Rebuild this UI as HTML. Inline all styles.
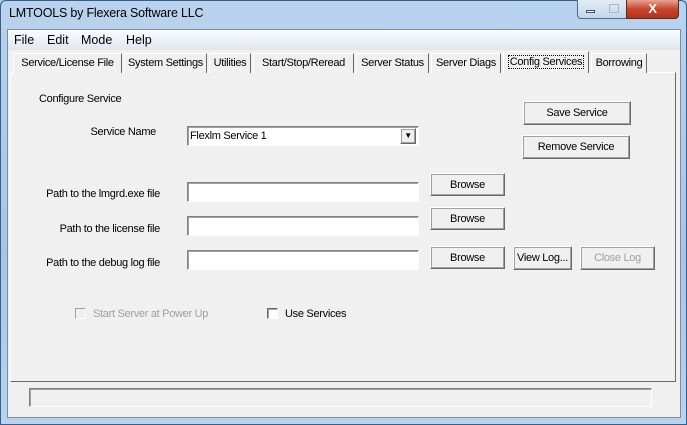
<!DOCTYPE html>
<html><head><meta charset="utf-8"><style>
*{margin:0;padding:0;box-sizing:border-box}
body{width:687px;height:425px;overflow:hidden;position:relative;font-family:"Liberation Sans",sans-serif;font-size:11px;letter-spacing:-0.3px;color:#000;background:#a9c8e8}
.a{position:absolute}
.frame{left:0;top:0;width:687px;height:425px;background:linear-gradient(#b9d3ee,#a6c5e8 60%,#b9d3ee);border:1px solid #3a5e8a;border-radius:6px 6px 0 0}
.client{left:7px;top:29px;width:674px;height:389px;background:#f0f0f0;border:1px solid #7b8ea6}
.menu{left:8px;top:30px;width:672px;height:20px;background:linear-gradient(#fbfcfe,#dfe6f0)}
.menu span{position:absolute;top:3px;font-size:12.5px;letter-spacing:0}
.tab{position:absolute;top:53px;height:20px;border:1px solid #fff;border-right-color:#696969;border-bottom:none;background:#f0f0f0;text-align:center;line-height:19px;white-space:nowrap}
.panel{left:10px;top:72px;width:666px;height:310px;border:1px solid #fff;border-right-color:#696969;border-bottom-color:#696969}
.btn{position:absolute;border:1px solid;border-color:#fff #696969 #696969 #fff;box-shadow:1px 1px 0 #a0a0a0 inset,-1px -1px 0 #a0a0a0 inset;background:#f0f0f0;text-align:center;white-space:nowrap}
.edit{position:absolute;background:#fff;border:1px solid;border-color:#828282 #fff #fff #828282;box-shadow:1px 1px 0 #a0a0a0 inset}
.lbl{position:absolute;white-space:nowrap}
.r{text-align:right;width:200px}
.cb{position:absolute;width:11px;height:11px;background:#fff;border:1px solid;border-color:#696969 #fff #fff #696969;box-shadow:1px 1px 0 #a0a0a0 inset}
</style></head><body>
<div class="a frame"></div>
<div class="a" style="left:9px;top:6px;font-size:12.5px;letter-spacing:-0.2px">LMTOOLS by Flexera Software LLC</div>
<div class="a" style="left:577px;top:0;width:26px;height:19px;border:1px solid #4e6a8c;border-top:none;border-radius:0 0 0 4px;background:linear-gradient(#e3ecf6,#c4d5ea)"><div class="a" style="left:8px;top:10px;width:9px;height:3px;background:#fff;border:1px solid #3b4f68"></div></div>
<div class="a" style="left:602px;top:0;width:25px;height:19px;border:1px solid #4e6a8c;border-top:none;border-left:none;background:linear-gradient(#e3ecf6,#c4d5ea)"><div class="a" style="left:7px;top:4px;width:10px;height:9px;border:1px solid #a9b6c6"></div></div>
<div class="a" style="left:626px;top:0;width:53px;height:19px;border:1px solid #5a2a20;border-top:none;border-radius:0 0 4px 0;background:linear-gradient(#e8a593,#c8452d 50%,#b3321c);color:#fff;font-weight:bold;text-align:center;font-size:13px;line-height:17px">X</div>
<div class="a client"></div>
<div class="a menu"><span style="left:6px">File</span><span style="left:39px">Edit</span><span style="left:73px">Mode</span><span style="left:118px">Help</span></div>
<div class="a panel"></div>
<div class="tab" style="left:13px;width:109px">Service/License File</div>
<div class="tab" style="left:124px;width:83px">System Settings</div>
<div class="tab" style="left:209px;width:42px">Utilities</div>
<div class="tab" style="left:253px;width:101px">Start/Stop/Reread</div>
<div class="tab" style="left:356px;width:73px">Server Status</div>
<div class="tab" style="left:431px;width:70px">Server Diags</div>
<div class="tab" style="left:503px;top:51px;height:22px;width:86px;line-height:20px"><span style="border:1px dotted #000;padding:0 1px">Config Services</span></div>
<div class="tab" style="left:591px;width:56px">Borrowing</div>
<div class="lbl" style="left:39px;top:93px">Configure Service</div>
<div class="lbl r" style="left:-44px;top:126px">Service Name</div>
<div class="edit" style="left:187px;top:126px;width:232px;height:20px"><span class="lbl" style="left:2px;top:3px">Flexlm Service 1</span><div class="btn" style="left:212px;top:1px;width:16px;height:16px;font-size:8px;line-height:14px">▼</div></div>
<div class="btn" style="left:523px;top:101px;width:108px;height:24px;line-height:23px">Save Service</div>
<div class="btn" style="left:522px;top:135px;width:108px;height:24px;line-height:23px">Remove Service</div>
<div class="lbl r" style="left:-40px;top:188px">Path to the lmgrd.exe file</div>
<div class="edit" style="left:187px;top:182px;width:232px;height:20px"></div>
<div class="btn" style="left:430px;top:173px;width:75px;height:23px;line-height:22px">Browse</div>
<div class="lbl r" style="left:-40px;top:223px">Path to the license file</div>
<div class="edit" style="left:187px;top:216px;width:232px;height:20px"></div>
<div class="btn" style="left:430px;top:207px;width:75px;height:23px;line-height:22px">Browse</div>
<div class="lbl r" style="left:-40px;top:257px">Path to the debug log file</div>
<div class="edit" style="left:187px;top:250px;width:232px;height:20px"></div>
<div class="btn" style="left:430px;top:246px;width:75px;height:23px;line-height:22px">Browse</div>
<div class="btn" style="left:513px;top:246px;width:59px;height:24px;line-height:23px">View Log...</div>
<div class="btn" style="left:580px;top:246px;width:75px;height:24px;line-height:23px;color:#a0a0a0">Close Log</div>
<div class="cb" style="left:75px;top:308px;background:#f0f0f0;border-color:#a0a0a0 #fff #fff #a0a0a0;box-shadow:none"></div>
<div class="lbl" style="left:93px;top:308px;color:#a0a0a0">Start Server at Power Up</div>
<div class="cb" style="left:267px;top:308px"></div>
<div class="lbl" style="left:285px;top:308px">Use Services</div>
<div class="a" style="left:29px;top:388px;width:623px;height:19px;border:1px solid;border-color:#808080 #fff #fff #808080;box-shadow:1px 1px 0 #a0a0a0 inset"></div>
</body></html>
